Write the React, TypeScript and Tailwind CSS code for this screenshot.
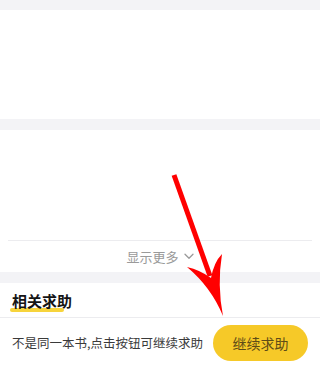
import React from 'react';

const font = { fontFamily: '"Noto Sans CJK SC", "Noto Sans", sans-serif' };

function Chevron() {
  return (
    <svg width="10" height="7" viewBox="0 0 10 7" className="ml-[5px]">
      <path d="M1 1.2 L5 5.2 L9 1.2" stroke="#9a9a9a" strokeWidth="1.3" fill="none" strokeLinecap="round" strokeLinejoin="round" />
    </svg>
  );
}

function RedArrow() {
  return (
    <svg className="absolute left-0 top-0 pointer-events-none" width="320" height="365" viewBox="0 0 320 365">
      {/* shaft */}
      <path d="M174 175 L210 276" stroke="#ff0000" strokeWidth="5" fill="none" />
      {/* head */}
      <path
        d="M187 267 Q200 270 211 278 Q214 262 222 254 Q217 285 223 316 Q211 287 187 267 Z"
        fill="#ff0000"
      />
    </svg>
  );
}

export default function App() {
  return (
    <div className="relative w-[320px] h-[365px] overflow-hidden bg-[#f3f3f6] flex flex-col" style={font}>
      <div className="h-[10px] shrink-0" />
      <div className="h-[109px] shrink-0 bg-white" />
      <div className="h-[11px] shrink-0" />

      <div className="h-[142px] shrink-0 bg-white flex flex-col">
        <div className="flex-1" />
        <div className="mx-[8px] h-px bg-[#ececef]" />
        <div className="h-[31px] flex items-center justify-center text-[13px] text-[#9a9a9a]">
          <span>显示更多</span>
          <Chevron />
        </div>
      </div>

      <div className="h-[11px] shrink-0" />

      <div className="h-[35px] shrink-0 bg-white border-b border-[#ececef] flex items-center px-[12px]">
        <div className="relative">
          <div className="absolute left-[-2px] right-[8px] bottom-[0px] h-[4px] bg-[#f7d43c] rounded-sm" />
          <span className="relative text-[15px] font-bold text-[#151515] leading-none">相关求助</span>
        </div>
      </div>

      <div className="h-[50px] shrink-0 bg-white flex items-center justify-between pl-[12px] pr-[12px]">
        <span className="text-[12.5px] text-[#3a3a3a]">不是同一本书,点击按钮可继续求助</span>
        <button className="w-[95px] h-[36px] rounded-full bg-[#f6c928] text-[14px] text-[#5e4c17]">
          继续求助
        </button>
      </div>

      <RedArrow />
    </div>
  );
}
